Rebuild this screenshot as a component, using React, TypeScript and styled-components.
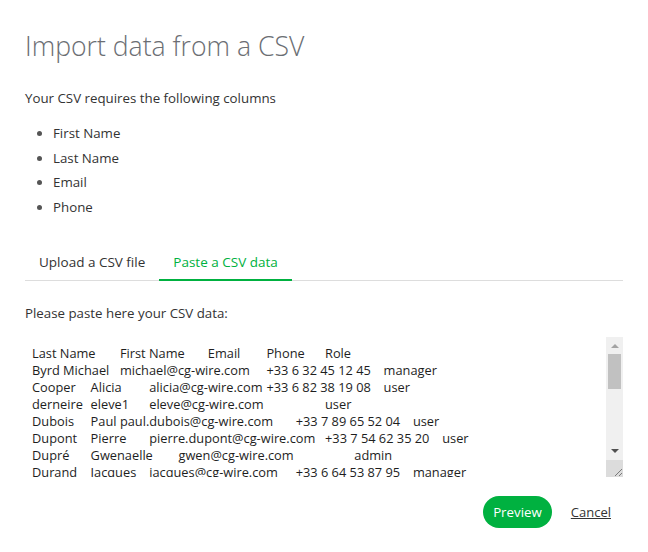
import React, { FC, UIEvent, useState } from 'react';
import styled, { createGlobalStyle } from 'styled-components';

const GREEN = '#00b140';
const TEXT = '#333333';
const AREA_HEIGHT = 140;
const RAIL_BUTTON = 17;

const GlobalStyle = createGlobalStyle`
  html, body {
    margin: 0;
    padding: 0;
    background: #ffffff;
  }
  body {
    font-family: "Open Sans", "Noto Sans", sans-serif;
    color: ${TEXT};
  }
  * {
    box-sizing: border-box;
  }
`;

const Root = styled.div`
  width: 648px;
  padding: 29px 25px 24px;
`;

const Title = styled.h1`
  margin: 0;
  font-size: 26.6px;
  line-height: 34px;
  font-weight: 300;
  color: #6b6e73;
`;

const Intro = styled.p`
  margin: 25px 0 0;
  font-size: 13.3px;
  line-height: 20px;
`;

const ColumnList = styled.ul`
  margin: 13px 0 0;
  padding-left: 28px;
  font-size: 13.3px;
  line-height: 24.5px;

  li::marker {
    color: #555;
  }
`;

const TabBar = styled.div`
  display: flex;
  margin-top: 27px;
  border-bottom: 1px solid #dddddd;
`;

const Tab = styled.button<{ $active?: boolean }>`
  margin: 0 0 -1px;
  padding: 6px 14px 7px;
  border: none;
  border-bottom: 2px solid ${({ $active }) => ($active ? GREEN : 'transparent')};
  background: none;
  font: inherit;
  font-size: 13.5px;
  line-height: 20px;
  color: ${({ $active }) => ($active ? GREEN : TEXT)};
  cursor: pointer;
`;

const Hint = styled.p`
  margin: 22px 0 0;
  font-size: 13.3px;
  line-height: 20px;
`;

const AreaFrame = styled.div`
  display: flex;
  width: 598px;
  height: ${AREA_HEIGHT}px;
  margin-top: 14px;
`;

const CsvArea = styled.textarea`
  flex: 1;
  min-width: 0;
  height: 100%;
  padding: 8px 7px;
  border: none;
  outline: none;
  resize: none;
  font-family: "Open Sans", "Noto Sans", sans-serif;
  font-size: 12.8px;
  line-height: 17px;
  color: #1e1e1e;
  tab-size: 29.3px;
  white-space: pre;
  overflow: auto;
  scrollbar-width: none;

  &::-webkit-scrollbar {
    display: none;
  }
`;

const ScrollRail = styled.div`
  display: flex;
  flex-direction: column;
  width: 17px;
  background: #f0f0f0;
`;

const RailButton = styled.div`
  display: flex;
  align-items: center;
  justify-content: center;
  height: ${RAIL_BUTTON}px;
  flex: none;
`;

const RailTrack = styled.div`
  position: relative;
  flex: 1;
`;

const RailThumb = styled.div`
  position: absolute;
  left: 2px;
  right: 2px;
  background: #c1c1c1;
`;

const Resizer = styled.div`
  display: flex;
  align-items: flex-end;
  justify-content: flex-end;
  height: 17px;
  flex: none;
  background: #dcdcdc;
`;

const Actions = styled.div`
  display: flex;
  justify-content: flex-end;
  align-items: center;
  gap: 19px;
  margin-top: 19px;
  padding-right: 12px;
`;

const PreviewButton = styled.button`
  height: 32px;
  padding: 0 10px;
  border: none;
  border-radius: 16px;
  background: ${GREEN};
  color: #ffffff;
  font: inherit;
  font-size: 13.3px;
  cursor: pointer;
`;

const CancelLink = styled.a`
  font-size: 13px;
  color: ${TEXT};
  text-decoration: underline;
  cursor: pointer;
`;

const csvRows = [
  'Last Name\tFirst Name\tEmail\tPhone\tRole',
  'Byrd Michael\tmichael@cg-wire.com\t+33 6 32 45 12 45\tmanager',
  'Cooper\tAlicia\talicia@cg-wire.com\t+33 6 82 38 19 08\tuser',
  'derneire\televe1\televe@cg-wire.com\t\t\tuser',
  'Dubois\tPaul\tpaul.dubois@cg-wire.com\t+33 7 89 65 52 04\tuser',
  'Dupont\tPierre\tpierre.dupont@cg-wire.com\t+33 7 54 62 35 20\tuser',
  'Dupré\tGwenaelle\tgwen@cg-wire.com\t\t\tadmin',
  'Durand\tJacques\tjacques@cg-wire.com\t+33 6 64 53 87 95\tmanager',
  'Fontaine\tLouis\tlouis@cg-wire.com\t+33 6 12 34 56 78\tuser',
  'Garnier\tClaire\tclaire@cg-wire.com\t+33 6 45 67 89 01\tsupervisor',
  'Lambert\tHugo\thugo@cg-wire.com\t+33 7 23 45 67 89\tuser',
  'Martin\tSophie\tsophie@cg-wire.com\t+33 6 98 76 54 32\tmanager',
  'Moreau\tJulien\tjulien@cg-wire.com\t+33 6 11 22 33 44\tuser',
  'Petit\tEmma\temma@cg-wire.com\t+33 7 55 66 77 88\tuser',
  'Roux\tThomas\tthomas@cg-wire.com\t+33 6 99 88 77 66\tadmin',
  'Simon\tLéa\tlea@cg-wire.com\t+33 6 44 33 22 11\tuser',
  'Vincent\tMarc\tmarc@cg-wire.com\t+33 7 12 12 12 12\tuser',
];

const requiredColumns = ['First Name', 'Last Name', 'Email', 'Phone'];

const Arrow: FC<{ dir: 'up' | 'down'; color: string }> = ({ dir, color }) => (
  <svg width="8" height="5" viewBox="0 0 8 5">
    <polygon points={dir === 'up' ? '0,5 4,1 8,5' : '0,0 8,0 4,4'} fill={color} />
  </svg>
);

const ResizeGrip: FC = () => (
  <svg width="11" height="11" viewBox="0 0 11 11">
    <path d="M3 10 L10 3 M7 10 L10 7" stroke="#7a7a7a" strokeWidth="1" />
  </svg>
);

const App: FC = () => {
  const [tab, setTab] = useState<'file' | 'paste'>('paste');
  const [csv, setCsv] = useState(csvRows.join('\n'));
  const [scroll, setScroll] = useState({ top: 0, height: 17 * csvRows.length + 16 });

  const trackHeight = AREA_HEIGHT - RAIL_BUTTON * 3;
  const ratio = Math.min(1, AREA_HEIGHT / scroll.height);
  const thumbHeight = Math.max(20, Math.round(trackHeight * ratio * 0.86));
  const maxTop = Math.max(1, scroll.height - AREA_HEIGHT);
  const thumbTop = Math.round((scroll.top / maxTop) * (trackHeight - thumbHeight));

  const onScroll = (e: UIEvent<HTMLTextAreaElement>) => {
    const el = e.currentTarget;
    setScroll({ top: el.scrollTop, height: el.scrollHeight });
  };

  return (
    <Root>
      <GlobalStyle />
      <Title>Import data from a CSV</Title>
      <Intro>Your CSV requires the following columns</Intro>
      <ColumnList>
        {requiredColumns.map((column) => (
          <li key={column}>{column}</li>
        ))}
      </ColumnList>

      <TabBar>
        <Tab $active={tab === 'file'} onClick={() => setTab('file')}>
          Upload a CSV file
        </Tab>
        <Tab $active={tab === 'paste'} onClick={() => setTab('paste')}>
          Paste a CSV data
        </Tab>
      </TabBar>

      <Hint>Please paste here your CSV data:</Hint>
      <AreaFrame>
        <CsvArea
          value={csv}
          spellCheck={false}
          onScroll={onScroll}
          onChange={(e) => setCsv(e.target.value)}
        />
        <ScrollRail>
          <RailButton>
            <Arrow dir="up" color="#a3a3a3" />
          </RailButton>
          <RailTrack>
            <RailThumb style={{ top: thumbTop, height: thumbHeight }} />
          </RailTrack>
          <RailButton>
            <Arrow dir="down" color="#505050" />
          </RailButton>
          <Resizer>
            <ResizeGrip />
          </Resizer>
        </ScrollRail>
      </AreaFrame>

      <Actions>
        <PreviewButton>Preview</PreviewButton>
        <CancelLink>Cancel</CancelLink>
      </Actions>
    </Root>
  );
};

export default App;
